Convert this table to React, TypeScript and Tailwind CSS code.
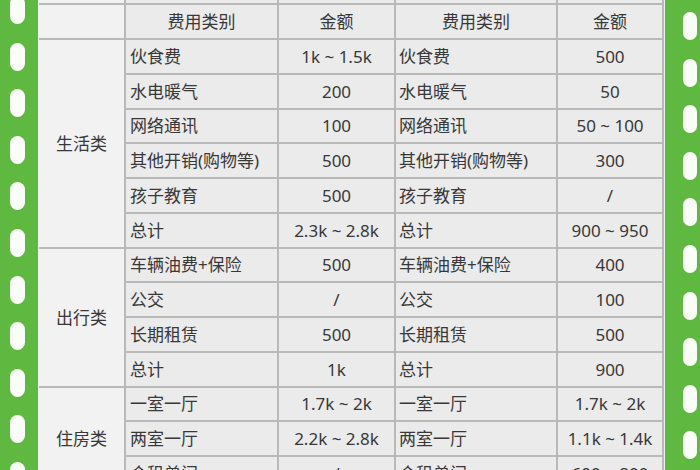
import React from "react";

type Row = { cat?: string; span?: number; a: string; b: string; c: string; d: string };

const rows: Row[] = [
  { cat: "生活类", span: 6, a: "伙食费", b: "1k ~ 1.5k", c: "伙食费", d: "500" },
  { a: "水电暖气", b: "200", c: "水电暖气", d: "50" },
  { a: "网络通讯", b: "100", c: "网络通讯", d: "50 ~ 100" },
  { a: "其他开销(购物等)", b: "500", c: "其他开销(购物等)", d: "300" },
  { a: "孩子教育", b: "500", c: "孩子教育", d: "/" },
  { a: "总计", b: "2.3k ~ 2.8k", c: "总计", d: "900 ~ 950" },
  { cat: "出行类", span: 4, a: "车辆油费+保险", b: "500", c: "车辆油费+保险", d: "400" },
  { a: "公交", b: "/", c: "公交", d: "100" },
  { a: "长期租赁", b: "500", c: "长期租赁", d: "500" },
  { a: "总计", b: "1k", c: "总计", d: "900" },
  { cat: "住房类", span: 3, a: "一室一厅", b: "1.7k ~ 2k", c: "一室一厅", d: "1.7k ~ 2k" },
  { a: "两室一厅", b: "2.2k ~ 2.8k", c: "两室一厅", d: "1.1k ~ 1.4k" },
  { a: "合租单间", b: "/", c: "合租单间", d: "600 ~ 800" },
];

const holes = Array.from({ length: 11 });

export default function App() {
  const cell = "border-2 border-[#b9b9b9] p-0";
  return (
    <div
      className="w-[700px] h-[470px] overflow-hidden flex bg-[#5fb83f] text-[#383838]"
      style={{ fontFamily: '"Noto Sans", "Noto Sans CJK SC", sans-serif' }}
    >
      <div className="w-[38px] shrink-0 flex flex-col items-start pl-[10px] mt-[-4px] gap-[18.6px]">
        {holes.map((_, i) => (
          <div key={i} className="w-[15px] h-[28px] shrink-0 rounded-full bg-[#fbfdf8]" />
        ))}
      </div>
      <div className="w-[627px] shrink-0 h-[470px] overflow-hidden bg-[#efefef] pl-[1px]">
        <table className="table-fixed border-collapse w-[624px] mt-[-32px] bg-[#ebebeb] text-[17px] leading-none">
          <colgroup>
            <col className="w-[86px]" />
            <col className="w-[153px]" />
            <col className="w-[117px]" />
            <col className="w-[162px]" />
            <col className="w-[106px]" />
          </colgroup>
          <tbody>
            <tr className="h-[35px]">
              <td className={`${cell} border-l-0 bg-[#f2f2f2]`} />
              <td className={cell} />
              <td className={cell} />
              <td className={cell} />
              <td className={cell} />
            </tr>
            <tr className="h-[35px]">
              <td className={`${cell} border-l-0 bg-[#f2f2f2]`} />
              <td className={`${cell} text-center`}>费用类别</td>
              <td className={`${cell} text-center`}>金额</td>
              <td className={`${cell} text-center`}>费用类别</td>
              <td className={`${cell} text-center`}>金额</td>
            </tr>
            {rows.map((r, i) => (
              <tr key={i} className="h-[34.75px]">
                {r.cat && (
                  <td rowSpan={r.span} className={`${cell} border-l-0 bg-[#f2f2f2] text-center`}>
                    {r.cat}
                  </td>
                )}
                <td className={`${cell} pl-[4px] whitespace-nowrap`}>{r.a}</td>
                <td className={`${cell} text-center whitespace-nowrap`}>{r.b}</td>
                <td className={`${cell} pl-[3px] whitespace-nowrap`}>{r.c}</td>
                <td className={`${cell} text-center whitespace-nowrap`}>{r.d}</td>
              </tr>
            ))}
          </tbody>
        </table>
      </div>
      <div className="flex-1 flex flex-col items-start pl-[18px] mt-[12px] gap-[18.6px]">
        {holes.map((_, i) => (
          <div key={i} className="w-[14px] h-[28px] shrink-0 rounded-full bg-[#fbfdf8]" />
        ))}
      </div>
    </div>
  );
}
